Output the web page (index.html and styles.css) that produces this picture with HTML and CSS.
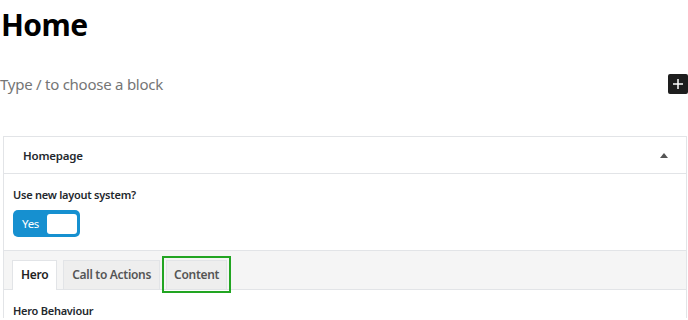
FILE: index.html
```html
<!DOCTYPE html>
<html lang="en">
<head>
  <meta charset="UTF-8">
  <title>Home</title>
  <link rel="stylesheet" href="styles.css">
</head>
<body>
  <h1 class="post-title">Home</h1>

  <div class="appender">
    <p class="placeholder">Type / to choose a block</p>
    <button class="inserter" aria-label="Add block">
      <svg width="12" height="12" viewBox="0 0 12 12"><path d="M6 1v10M1 6h10" stroke="#fff" stroke-width="1.5"/></svg>
    </button>
  </div>

  <div class="metabox">
    <div class="metabox-head">
      <h2>Homepage</h2>
      <span class="toggle-arrow"></span>
    </div>
    <div class="field">
      <label class="field-label">Use new layout system?</label>
      <div class="switch">
        <span class="switch-on">Yes</span>
        <span class="switch-knob"></span>
      </div>
    </div>
    <div class="tabs">
      <a class="tab active">Hero</a>
      <a class="tab">Call to Actions</a>
      <a class="tab focused">Content</a>
    </div>
    <div class="field">
      <label class="field-label">Hero Behaviour</label>
    </div>
  </div>
</body>
</html>
```

FILE: styles.css
```css
* { box-sizing: border-box; margin: 0; padding: 0 }
body {
  font-family: 'Noto Sans', 'Open Sans', sans-serif;
  background: #fff;
  color: #1e1e1e;
  width: 688px;
  overflow: hidden;
}
.post-title {
  font-size: 30px;
  font-weight: 700;
  letter-spacing: -0.6px;
  line-height: 50px;
  color: #000;
  padding-left: 1px;
}
.appender {
  display: flex;
  align-items: center;
  justify-content: space-between;
  margin-top: 20px;
  height: 28px;
}
.placeholder {
  font-size: 15px;
  letter-spacing: -0.25px;
  color: #757575;
}
.inserter {
  width: 20px; height: 20px;
  background: #1e1e1e;
  border: none; border-radius: 2px;
  display: flex; align-items: center; justify-content: center;
}
.metabox {
  margin: 38px 1px 0 3px;
  border: 1px solid #e2e4e7;
  border-bottom: none;
}
.metabox-head {
  height: 37px;
  border-bottom: 1px solid #e2e4e7;
  display: flex; align-items: center; justify-content: space-between;
  padding: 0 18px 0 19px;
}
.metabox-head h2 {
  font-size: 11.5px;
  font-weight: 600;
  letter-spacing: -0.2px;
  color: #23282d;
}
.toggle-arrow {
  width: 0; height: 0;
  border-left: 4px solid transparent;
  border-right: 4px solid transparent;
  border-bottom: 5px solid #555;
}
.field {
  padding: 13px 9px 0;
}
.field-label {
  display: block;
  font-size: 11px;
  font-weight: 600;
  letter-spacing: -0.25px;
  color: #23282d;
  margin-bottom: 8px;
}
.switch {
  width: 67px; height: 27px;
  background: #1690d0;
  border-radius: 5px;
  display: flex; align-items: center; justify-content: space-between;
  padding: 0 3px 0 9px;
  margin-bottom: 13px;
}
.switch-on {
  color: #fff;
  font-size: 11.5px;
  letter-spacing: -0.3px;
}
.switch-knob {
  width: 30px; height: 20px;
  background: #fff;
  border-radius: 3px;
}
.tabs {
  background: #f5f5f5;
  border-top: 1px solid #e2e4e7;
  border-bottom: 1px solid #e2e4e7;
  padding: 9px 8px 0;
  display: flex;
  gap: 6px;
}
.tab {
  font-size: 12px;
  font-weight: 600;
  letter-spacing: -0.3px;
  color: #555;
  background: #eee;
  border: 1px solid #e2e4e7;
  border-bottom: none;
  padding: 0 8px;
  height: 29px;
  line-height: 28px;
  margin-bottom: -1px;
}
.tab.active {
  background: #fff;
  color: #222;
  height: 30px;
}
.tab.focused {
  padding: 0 7px;
  outline: 2px solid #22a522;
  outline-offset: 2px;
}
.tabs + .field { padding-top: 13px }
```
